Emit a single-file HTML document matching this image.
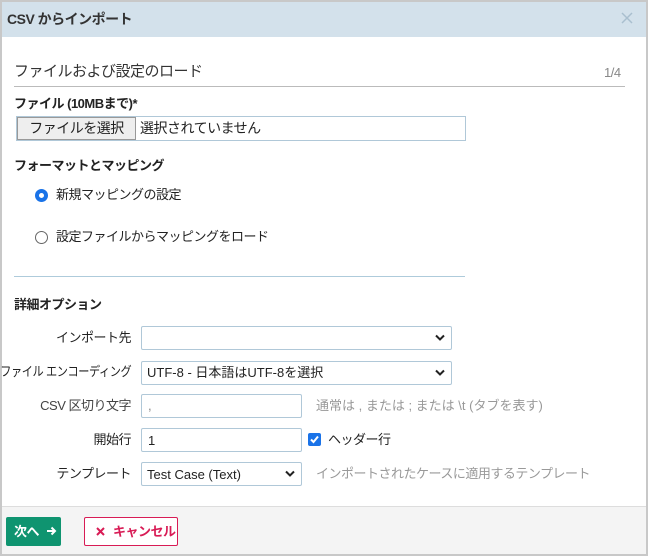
<!DOCTYPE html>
<html><head><meta charset="utf-8"><style>
*{box-sizing:border-box;margin:0;padding:0}
body{width:648px;height:556px;background:#c8c8c8;font-family:"Liberation Sans","Noto Sans CJK JP",sans-serif;font-size:13px;line-height:16px;letter-spacing:-0.5px;color:#222;position:relative;overflow:hidden}
.dlg{position:absolute;left:2px;top:2px;width:644px;height:552px;background:#fff}
.hdr{position:absolute;left:0;top:0;width:644px;height:35px;background:#d3e1eb}
.a{position:absolute;white-space:nowrap}
.box{position:absolute;border:1px solid #b0c8d8;background:#fff;border-radius:2px}
.lbl{position:absolute;right:515px;text-align:right;white-space:nowrap;transform-origin:right center}
.chev{position:absolute;right:6px;top:7px}
.hint{color:#999}
.foot{position:absolute;left:0;top:504px;width:644px;height:48px;background:#f4f4f4;border-top:1px solid #ddd}
</style></head><body>
<div class="dlg">
<div class="hdr"></div>
<div class="a" style="left:5px;top:9px;font-size:14px;font-weight:bold;color:#333">CSV からインポート</div>
<svg class="a" style="left:619px;top:10px" width="12" height="12"><path d="M1 1L11 11M11 1L1 11" stroke="#a9bfcf" stroke-width="1.5"/></svg>
<div class="a" style="left:12px;top:61px;font-size:15px;line-height:18px;color:#333">ファイルおよび設定のロード</div>
<div class="a" style="left:602px;top:63px;font-size:13px;color:#888">1/4</div>
<div class="a" style="left:12px;top:84px;width:611px;height:1px;background:#bbb"></div>
<div class="a" style="left:12px;top:94px;font-weight:bold">ファイル (10MBまで)*</div>
<div class="box" style="left:14px;top:114px;width:450px;height:25px;border-radius:0"></div>
<div class="a" style="left:15px;top:115px;width:119px;height:23px;background:#eee;border:1px solid #999;font-size:14px;text-align:center;line-height:21px">ファイルを選択</div>
<div class="a" style="left:138px;top:118px;font-size:14px">選択されていません</div>
<div class="a" style="left:12px;top:156px;font-weight:bold">フォーマットとマッピング</div>
<div class="a" style="left:33px;top:187px;width:13px;height:13px;border-radius:50%;border:4px solid #1a73e8"></div>
<div class="a" style="left:54px;top:185px">新規マッピングの設定</div>
<div class="a" style="left:33px;top:229px;width:13px;height:13px;border-radius:50%;border:1px solid #666"></div>
<div class="a" style="left:54px;top:227px">設定ファイルからマッピングをロード</div>
<div class="a" style="left:12px;top:274px;width:451px;height:1px;background:#aecbdb"></div>
<div class="a" style="left:12px;top:295px;font-weight:bold">詳細オプション</div>

<div class="lbl" style="top:328px">インポート先</div>
<div class="box" style="left:139px;top:324px;width:311px;height:24px"><svg class="chev" width="10" height="8"><path d="M1 1.5L5 5.5L9 1.5" stroke="#222" stroke-width="2" fill="none"/></svg></div>
<div class="lbl" style="top:362px;transform:scaleX(0.86)">ファイル エンコーディング</div>
<div class="box" style="left:139px;top:359px;width:311px;height:24px"><span class="a" style="left:5px;top:3px;letter-spacing:0">UTF-8 - 日本語はUTF-8を選択</span><svg class="chev" width="10" height="8"><path d="M1 1.5L5 5.5L9 1.5" stroke="#222" stroke-width="2" fill="none"/></svg></div>
<div class="lbl" style="top:396px;color:#444">CSV 区切り文字</div>
<div class="box" style="left:139px;top:392px;width:161px;height:24px"><span class="a" style="left:6px;top:3px;color:#888">,</span></div>
<div class="a hint" style="left:314px;top:396px;letter-spacing:0">通常は , または ; または \t (タブを表す)</div>
<div class="lbl" style="top:430px">開始行</div>
<div class="box" style="left:139px;top:426px;width:161px;height:24px"><span class="a" style="left:6px;top:4px">1</span></div>
<div class="a" style="left:306px;top:431px;width:13px;height:13px;background:#1a73e8;border-radius:2px"><svg width="13" height="13" style="position:absolute;left:0;top:0"><path d="M3 6.5L5.5 9L10 3.5" stroke="#fff" stroke-width="2" fill="none"/></svg></div>
<div class="a" style="left:326px;top:430px">ヘッダー行</div>
<div class="lbl" style="top:464px">テンプレート</div>
<div class="box" style="left:139px;top:460px;width:161px;height:24px"><span class="a" style="left:5px;top:4px;letter-spacing:0">Test Case (Text)</span><svg class="chev" width="10" height="8"><path d="M1 1.5L5 5.5L9 1.5" stroke="#222" stroke-width="2" fill="none"/></svg></div>
<div class="a hint" style="left:314px;top:464px">インポートされたケースに適用するテンプレート</div>

<div class="foot"></div>
<div class="a" style="left:4px;top:515px;width:55px;height:29px;background:#0f9470;border-radius:2px;color:#fff;font-weight:bold;line-height:29px;padding-left:8px">次へ <svg width="11" height="10" style="margin-left:4px"><path d="M1 5H9M5.5 1.5L9 5L5.5 8.5" stroke="#fff" stroke-width="2" fill="none"/></svg></div>
<div class="a" style="left:82px;top:515px;width:94px;height:29px;background:#fff;border:1px solid #d81b55;border-radius:2px;color:#d81b55;font-weight:bold;line-height:27px;padding-left:11px"><svg width="9" height="9" style="margin-right:8px"><path d="M1 1L8 8M8 1L1 8" stroke="#d81b55" stroke-width="2"/></svg>キャンセル</div>
</div>
</body></html>
